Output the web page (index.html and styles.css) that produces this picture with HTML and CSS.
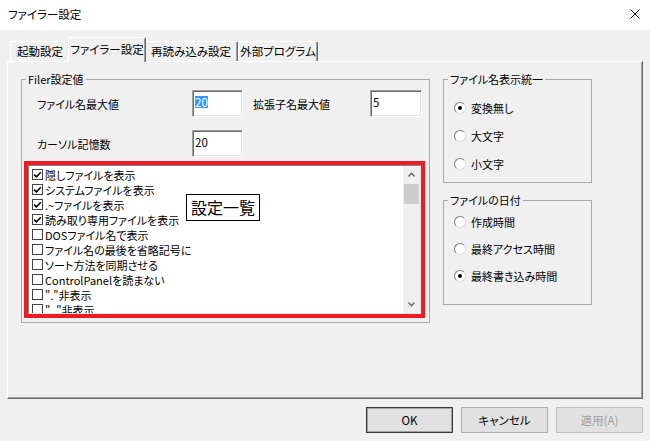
FILE: index.html
```html
<!DOCTYPE html>
<html lang="ja">
<head>
<meta charset="utf-8">
<title>ファイラー設定</title>
<link rel="stylesheet" href="styles.css">
</head>
<body>
<div class="titlebar">
  <span class="title">ファイラー設定</span>
  <svg class="close" width="10" height="10" viewBox="0 0 10 10"><path d="M0.5 0.5L9.5 9.5M9.5 0.5L0.5 9.5" stroke="#000" stroke-width="1" fill="none"/></svg>
</div>
<div class="tabs">
  <div class="tab t1">起動設定</div>
  <div class="tab active">ファイラー設定</div>
  <div class="tab t3">再読み込み設定</div>
  <div class="tab t4">外部プログラム</div>
</div>
<div class="panel">
  <fieldset class="group filer">
    <legend>Filer設定値</legend>
    <div class="row row1">
      <span class="lbl lbl1">ファイル名最大値</span>
      <div class="edit"><span class="sel">20</span></div>
      <span class="lbl lbl2">拡張子名最大値</span>
      <div class="edit edit2">5</div>
    </div>
    <div class="row row2">
      <span class="lbl lbl1">カーソル記憶数</span>
      <div class="edit">20</div>
    </div>
    <div class="hl">
      <div class="listbox">
        <ul class="items">
          <li><span class="cb on"><svg width="9" height="9" viewBox="0 0 9 9"><path d="M1.2 4.6L3.4 6.8L7.8 2.2" fill="none" stroke="#000" stroke-width="1.6"/></svg></span>隠しファイルを表示</li>
          <li><span class="cb on"><svg width="9" height="9" viewBox="0 0 9 9"><path d="M1.2 4.6L3.4 6.8L7.8 2.2" fill="none" stroke="#000" stroke-width="1.6"/></svg></span>システムファイルを表示</li>
          <li><span class="cb on"><svg width="9" height="9" viewBox="0 0 9 9"><path d="M1.2 4.6L3.4 6.8L7.8 2.2" fill="none" stroke="#000" stroke-width="1.6"/></svg></span>.~ファイルを表示</li>
          <li><span class="cb on"><svg width="9" height="9" viewBox="0 0 9 9"><path d="M1.2 4.6L3.4 6.8L7.8 2.2" fill="none" stroke="#000" stroke-width="1.6"/></svg></span>読み取り専用ファイルを表示</li>
          <li><span class="cb"></span>DOSファイル名で表示</li>
          <li><span class="cb"></span>ファイル名の最後を省略記号に</li>
          <li><span class="cb"></span>ソート方法を同期させる</li>
          <li><span class="cb"></span>ControlPanelを読まない</li>
          <li><span class="cb"></span>"."非表示</li>
          <li><span class="cb"></span>".."非表示</li>
        </ul>
        <div class="vscroll">
          <div class="sbtn"><svg width="7" height="5" viewBox="0 0 7 5"><path d="M0.5 4.5L3.5 1.2L6.5 4.5" fill="none" stroke="#606060" stroke-width="1.3"/></svg></div>
          <div class="track"><div class="thumb"></div></div>
          <div class="sbtn"><svg width="7" height="5" viewBox="0 0 7 5"><path d="M0.5 0.5L3.5 3.8L6.5 0.5" fill="none" stroke="#606060" stroke-width="1.3"/></svg></div>
        </div>
      </div>
      <div class="callout">設定一覧</div>
    </div>
  </fieldset>
  <div class="rightcol">
    <fieldset class="group r1">
      <legend>ファイル名表示統一</legend>
      <div class="opts">
        <div class="opt"><span class="radio on"></span>変換無し</div>
        <div class="opt"><span class="radio"></span>大文字</div>
        <div class="opt"><span class="radio"></span>小文字</div>
      </div>
    </fieldset>
    <fieldset class="group r2">
      <legend>ファイルの日付</legend>
      <div class="opts">
        <div class="opt"><span class="radio"></span>作成時間</div>
        <div class="opt"><span class="radio"></span>最終アクセス時間</div>
        <div class="opt"><span class="radio on"></span>最終書き込み時間</div>
      </div>
    </fieldset>
  </div>
</div>
<div class="buttons">
  <div class="btn default">OK</div>
  <div class="btn">キャンセル</div>
  <div class="btn disabled">適用(A)</div>
</div>
</body>
</html>
```
FILE: styles.css
```css
* { box-sizing: border-box; }
html, body { margin: 0; padding: 0; }
body {
  width: 650px;
  height: 441px;
  overflow: hidden;
  background: #f0f0f0;
  color: #000;
  font-family: "Noto Sans CJK JP", "Noto Sans", sans-serif;
  font-size: 11px;
  line-height: 14px;
  font-feature-settings: "palt";
  white-space: nowrap;
}

.titlebar {
  height: 30px;
  background: #fff;
  display: flex;
  align-items: center;
  justify-content: space-between;
  padding: 0 10px 2px 8px;
}
.title { font-size: 11.5px; }
.close { display: block; }

.tabs {
  height: 31px;
  display: flex;
  align-items: flex-end;
  padding-left: 10px;
}
.tab {
  flex-shrink: 0;
  height: 20px;
  display: flex;
  align-items: center;
  justify-content: center;
  padding-bottom: 1px;
  background: #f0f0f0;
  border-top: 1px solid #fff;
  border-left: 1px solid #fff;
  border-right: 1px solid #696969;
  box-shadow: inset -1px 0 0 #a0a0a0;
  border-radius: 2px 2px 0 0;
  font-size: 11.5px;
}
.t1 { width: 60px; }
.t3 { width: 94px; }
.t4 { width: 80px; }
.tab.active {
  width: 78px;
  height: 25px;
  margin: 0 -2px -1px;
  padding-bottom: 2px;
  z-index: 1;
}

.panel {
  margin: 0 7px;
  height: 338px;
  border: 1px solid;
  border-color: #fff #696969 #696969 #fff;
  box-shadow: inset -1px -1px 0 #a0a0a0;
  display: flex;
  align-items: flex-start;
  gap: 13px;
  padding: 9px 0 0 13px;
}

fieldset.group {
  margin: 0;
  padding: 0;
  min-width: 0;
  border: 1px solid #a9a9a9;
}
fieldset.group legend {
  padding: 0 2px;
  margin-left: 4px;
  line-height: 16px;
}

.filer { width: 409px; height: 252px; flex-shrink: 0; }

.row {
  display: flex;
  align-items: center;
  height: 27px;
  padding-left: 15px;
}
.row1 { margin-top: 3px; }
.row2 { margin-top: 13px; }
.lbl1 { width: 155px; }
.lbl2 { width: 117px; margin-left: 10px; }

.edit {
  width: 51px;
  height: 27px;
  background: #fff;
  border: 1px solid;
  border-color: #a0a0a0 #fff #fff #a0a0a0;
  box-shadow: inset 1px 1px 0 #696969, inset -1px -1px 0 #e3e3e3;
  padding: 5px 2px 0;
  line-height: 12px;
  font-size: 11.5px;
}
.edit2 { width: 52px; }
.sel {
  display: inline-block;
  background: #3399ff;
  color: #fff;
  line-height: 12px;
}

.hl {
  position: relative;
  margin: 4px 0 0 2px;
  width: 401px;
  height: 157px;
  border: 4px solid #ed1c24;
}
.listbox {
  height: 100%;
  display: flex;
  background: #fff;
  border: 1px solid;
  border-color: #828282 #e3e3e3 #e3e3e3 #828282;
}
.items {
  flex: 1;
  list-style: none;
  margin: 0;
  padding: 1px 0 0 3px;
  overflow: hidden;
}
.items li {
  height: 15px;
  line-height: 14px;
  display: flex;
  align-items: center;
}
.cb {
  width: 11px;
  height: 11px;
  flex-shrink: 0;
  margin-right: 2px;
  border: 1px solid #444;
  background: #fff;
  display: flex;
  align-items: center;
  justify-content: center;
}
.cb svg { display: block; }

.vscroll {
  width: 17px;
  flex-shrink: 0;
  background: #f0f0f0;
  display: flex;
  flex-direction: column;
}
.sbtn {
  height: 17px;
  display: flex;
  align-items: center;
  justify-content: center;
}
.sbtn svg { display: block; }
.track { flex: 1; }
.thumb {
  height: 20px;
  margin: 1px 1px 0;
  background: #cdcdcd;
}

.callout {
  position: absolute;
  left: 158px;
  top: 29px;
  width: 74px;
  height: 27px;
  border: 1px solid #000;
  background: #fff;
  font-size: 16px;
  line-height: 25px;
  text-align: center;
  font-feature-settings: normal;
}

.rightcol {
  display: flex;
  flex-direction: column;
  gap: 9px;
  width: 149px;
}
.r1 { height: 112px; }
.r2 { height: 113px; }
.r1 .opts { padding-top: 7px; }
.opt {
  height: 28px;
  display: flex;
  align-items: center;
  padding-left: 10px;
}
.r2 .opt { height: 27px; }
.radio {
  width: 12px;
  height: 12px;
  flex-shrink: 0;
  margin-right: 5px;
  border-radius: 50%;
  border: 1px solid;
  border-color: #7a7a7a #dcdcdc #dcdcdc #7a7a7a;
  background: #fff;
  display: flex;
  align-items: center;
  justify-content: center;
}
.radio.on::after {
  content: "";
  width: 4px;
  height: 4px;
  border-radius: 50%;
  background: #000;
}

.buttons {
  display: flex;
  justify-content: flex-end;
  gap: 8px;
  padding: 8px 7px 0;
}
.btn {
  width: 87px;
  height: 26px;
  display: flex;
  align-items: center;
  justify-content: center;
  background: #e1e1e1;
  border: 1px solid #adadad;
  padding-bottom: 1px;
  font-size: 11.5px;
}
.btn.default {
  border-color: #3c3c3c;
  box-shadow: inset 0 0 0 1px #a0a0a0;
}
.btn.disabled {
  border-color: #bfbfbf;
  color: #a0a0a0;
}
```
